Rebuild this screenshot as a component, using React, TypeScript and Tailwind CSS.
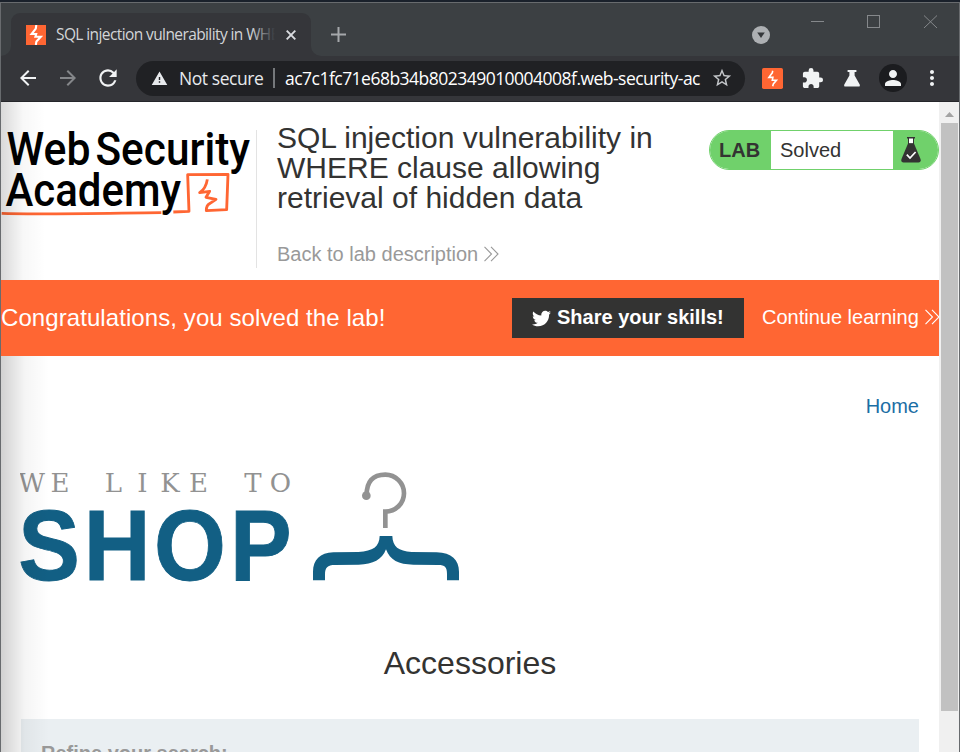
import type { ReactNode } from 'react';
import {
  MdArrowBack,
  MdArrowForward,
  MdExtension,
  MdMoreVert,
  MdPerson,
  MdRefresh,
  MdStarBorder,
  MdWarning,
} from 'react-icons/md';
import { FaTwitter } from 'react-icons/fa';

function BurpIcon({ size, radius, thin }: { size: number; radius: number; thin?: boolean }) {
  return (
    <svg width={size} height={size} viewBox="0 0 20 20">
      <rect width="20" height="20" rx={radius} fill="#ff6633" />
      {thin ? (
        <path d="M10.2 2.6 L9.8 4.6 L6.6 8.9 H10.4 L9.8 11.6 H13.8 L10.8 15.2 L10.2 17.4" fill="none" stroke="#fff" strokeWidth="1.5" />
      ) : (
        <path d="M10.3 0 L9.8 3.6 L5.6 9 H10.2 L9.4 11.8 H14.8 L10.4 16.6 L9.8 20" fill="none" stroke="#fff" strokeWidth="2.1" />
      )}
    </svg>
  );
}

function ToolButton({ children, dim }: { children: ReactNode; dim?: boolean }) {
  return (
    <div className={`flex h-10 w-10 shrink-0 items-center justify-center ${dim ? 'text-[#85878a]' : 'text-[#f1f3f4]'}`}>
      {children}
    </div>
  );
}

function TabStrip() {
  return (
    <div className="flex h-[53px] shrink-0 items-end bg-[#3c4043]">
      <svg width="10" height="10" viewBox="0 0 10 10">
        <path d="M10 0 V10 H0 A10 10 0 0 0 10 0Z" fill="#35363a" />
      </svg>
      <div className="flex h-[43px] w-[300px] items-center rounded-t-[9px] bg-[#35363a] pl-[15px]">
        <BurpIcon size={20} radius={0} />
        <div className="relative ml-[10px] w-[219px] overflow-hidden whitespace-nowrap text-[15.5px] leading-5 tracking-[-0.6px] text-[#d3d5d8]">
          <span className="relative -top-px">SQL injection vulnerability in WHE</span>
          <div className="absolute inset-y-0 right-0 w-6 bg-gradient-to-r from-transparent to-[#35363a]" />
        </div>
        <svg className="ml-[11px]" width="10" height="10" viewBox="0 0 10 10">
          <path d="M.7 .7 L9.3 9.3 M9.3 .7 L.7 9.3" stroke="#dadce0" strokeWidth="1.9" />
        </svg>
      </div>
      <svg width="10" height="10" viewBox="0 0 10 10">
        <path d="M0 0 V10 H10 A10 10 0 0 1 0 0Z" fill="#35363a" />
      </svg>
      <svg className="mb-[14px] ml-[10px]" width="15" height="15" viewBox="0 0 15 15">
        <path d="M7.5 0 V15 M0 7.5 H15" stroke="#a5a8ab" strokeWidth="2" />
      </svg>
      <svg className="mb-[12px] ml-[406px]" width="18" height="18" viewBox="0 0 18 18">
        <circle cx="9" cy="9" r="9" fill="#adb0b3" />
        <path d="M5.2 6.4 H12.8 L9 12Z" fill="#35383b" />
      </svg>
      <svg className="mb-[27px] ml-[41px]" width="128" height="14" viewBox="0 0 128 14" fill="none" stroke="#85888b">
        <path d="M0 6.5 H13" />
        <rect x="56.5" y=".5" width="12" height="12" />
        <path d="M113 .5 L126 13 M126 .5 L113 13" />
      </svg>
    </div>
  );
}

function Toolbar() {
  return (
    <div className="flex h-[46px] shrink-0 items-center border-b border-[#25262a] bg-[#35363a] pb-px pl-[7px]">
      <ToolButton><MdArrowBack size={24} /></ToolButton>
      <ToolButton dim><MdArrowForward size={24} /></ToolButton>
      <ToolButton><MdRefresh size={26} /></ToolButton>
      <div className="ml-2 flex h-[35px] w-[609px] items-center rounded-full bg-[#202124] pl-[15px] text-[17.5px] text-white">
        <MdWarning size={17} className="text-[#e8eaed]" />
        <div className="ml-[11px] w-[90px] whitespace-nowrap tracking-[-0.44px] text-[#e8eaed]">Not secure</div>
        <div className="ml-1 h-5 w-[2px] bg-[#75787b]" />
        <div className="ml-[10px] w-[416px] overflow-hidden whitespace-nowrap tracking-[-0.52px]">
          ac7c1fc71e68b34b802349010004008f.web-security-ac
        </div>
        <MdStarBorder size={22} className="ml-[10px] text-[#c4c7ca]" />
      </div>
      <div className="ml-[7px] flex">
        <ToolButton><BurpIcon size={21} radius={1.6} thin /></ToolButton>
        <ToolButton><MdExtension size={23} /></ToolButton>
        <ToolButton>
          <svg width="16" height="17" viewBox="0 0 16 17" fill="currentColor">
            <path d="M3.6 0 H12.4 V2 H10.6 V5.6 L15.7 14.4 Q16.4 16.6 14.4 16.6 H1.6 Q-.4 16.6 .3 14.4 L5.4 5.6 V2 H3.6Z" />
          </svg>
        </ToolButton>
        <ToolButton>
          <div className="ml-px flex size-7 items-center justify-center rounded-full bg-[#1b1c1f]">
            <MdPerson size={24} />
          </div>
        </ToolButton>
        <ToolButton><MdMoreVert size={24} /></ToolButton>
      </div>
    </div>
  );
}

function AcademyLogo() {
  return (
    <svg className="shrink-0" width="254" height="96" viewBox="1 126 254 96">
      <g fontFamily="Roboto, 'Liberation Sans', sans-serif" fontSize="47" fontWeight="500" fill="#000">
        <text y="165.4">
          <tspan x="6.5" textLength="84" lengthAdjust="spacingAndGlyphs">Web</tspan>
          <tspan x="95.5" textLength="154.5" lengthAdjust="spacingAndGlyphs">Security</tspan>
        </text>
        <text x="5.5" y="206.3" textLength="175.5" lengthAdjust="spacingAndGlyphs">Academy</text>
      </g>
      <g transform="translate(0 110) scale(.33333)" fill="none" stroke="#ff6633" strokeLinejoin="round">
        <path d="M5 310 C100 314 300 310 484 308 M520 306 L567 304 L563 194 L684 193 L680 299 L619 302 Q619 285 629 281 L648 268 L618 262 L629 244 L599 248 Q618 235 622 208" strokeWidth="8.5" />
      </g>
    </svg>
  );
}

function DoubleChevron({ color }: { color: string }) {
  return (
    <svg className="shrink-0" width="15" height="16" viewBox="0 0 15 16" fill="none" stroke={color} strokeWidth="1.1">
      <path d="M.5 .8 L7.5 8 L.5 15.2 M7 .8 L14 8 L7 15.2" />
    </svg>
  );
}

function LabBadge() {
  return (
    <div className="mt-7 flex h-10 w-[230px] shrink-0 overflow-hidden rounded-full border border-[#70d16b] bg-white text-[20px] leading-[38px] text-[#333332]">
      <div className="w-[61px] bg-[#70d16b] pl-[9px] font-bold">LAB</div>
      <div className="w-[122px] pl-[9px]">Solved</div>
      <div className="flex flex-1 items-center bg-[#70d16b] pl-2">
        <svg width="20" height="26" viewBox="0 0 20 26">
          <path d="M6 0 H14 V1.5 H13 V7 H7 V1.5 H6Z" fill="#333332" />
          <rect x="8" y="1.5" width="4" height="4.8" fill="#fff" />
          <path d="M7 6.5 H13 L19.5 22 Q20.4 25.5 17.5 25.5 H2.5 Q-.4 25.5 .5 22Z" fill="#333332" />
          <path d="M5.8 17.6 L9 21 L14.6 15" fill="none" stroke="#fff" strokeWidth="1.7" />
        </svg>
      </div>
    </div>
  );
}

function LabHeader() {
  return (
    <header className="flex h-[178px] w-[938px] items-start">
      <div className="mt-6"><AcademyLogo /></div>
      <div className="ml-px mt-7 h-[138px] w-px bg-[#e3e3e3]" />
      <div className="ml-5 mt-[21px] w-[432px] shrink-0 whitespace-nowrap">
        <h1 className="text-[30px] leading-[30px] text-[#333332]">
          SQL injection vulnerability in
          <br />
          WHERE clause allowing
          <br />
          retrieval of hidden data
        </h1>
        <a className="mt-[29px] flex items-center gap-[6px] text-[20px] leading-6 text-[#999]">
          Back to lab description <DoubleChevron color="#999" />
        </a>
      </div>
      <LabBadge />
    </header>
  );
}

function SolvedBanner() {
  return (
    <section className="flex h-[76px] w-[938px] items-center overflow-hidden bg-[#ff6633] text-white">
      <p className="w-[511px] shrink-0 whitespace-nowrap text-[24px] tracking-[0.08px]">
        Congratulations, you solved the lab!
      </p>
      <div className="flex h-10 w-[232px] shrink-0 items-center whitespace-nowrap bg-[#333332] pl-5 text-[20px] font-bold">
        <FaTwitter size={19} />
        <span className="-mt-0.5 ml-[6px] leading-[38px]">Share your skills!</span>
      </div>
      <a className="-mt-0.5 ml-[18px] flex items-center gap-[6px] whitespace-nowrap text-[20px] leading-[22px]">
        Continue learning <DoubleChevron color="#fff" />
      </a>
    </section>
  );
}

function ShopLogo() {
  return (
    <svg width="445" height="120" viewBox="20 465 445 120">
      <text
        x="31.5 60 113.5 142.5 170 198.5 253 280.5"
        y="492"
        textAnchor="middle"
        fontFamily="'DejaVu Serif', serif"
        fontSize="26"
        fill="#929292"
      >
        WELIKETO
      </text>
      <g transform="scale(.92 1)">
        <text
          x="53.3 127.2 206.5 283.5"
          y="580.4"
          textAnchor="middle"
          fontFamily="'Liberation Sans', Arial, sans-serif"
          fontSize="100.5"
          fontWeight="700"
          fill="#125f84"
          stroke="#125f84"
          strokeWidth=".9"
        >
          SHOP
        </text>
      </g>
      <g transform="translate(290 450) scale(.33333)">
        <path d="M230 137 Q229 74 286 74 A56 55.5 0 0 1 286 185 V234" fill="none" stroke="#929292" strokeWidth="14" />
        <circle cx="229" cy="137" r="13" fill="#929292" />
        <path
          d="M269 258 H307 C308 290 325 303 365 306 L440 307 C485 308 507 330 507 365 V391 H471 V372 C471 352 465 345 445 345 L370 344 C325 344 300 330 288 298 C276 330 250 342 206 344 L135 345 C112 345 105 352 105 375 V391 H69 V365 C69 330 90 308 130 307 L205 306 C250 303 268 290 269 258Z"
          fill="#125f84"
        />
      </g>
    </svg>
  );
}

function Scrollbar() {
  return (
    <div className="flex w-5 shrink-0 flex-col items-center bg-[#f0f0f0]">
      <div className="flex h-[21px] w-full items-center justify-center">
        <svg width="9" height="5" viewBox="0 0 9 5" className="mt-1">
          <path d="M0 5 L4.5 0 L9 5Z" fill="#a3a3a3" />
        </svg>
      </div>
      <div className="ml-px h-[588px] w-[17px] bg-[#c1c1c1]" />
    </div>
  );
}

export default function App() {
  return (
    <div className="flex h-[752px] w-[960px] flex-col overflow-hidden border-t-2 border-[#1a212b] font-['Liberation_Sans',Arial,sans-serif]">
      <div className="flex min-h-0 flex-1 flex-col border-x border-t border-[#686b6e]">
        <div className="font-['Open_Sans','Noto_Sans',sans-serif]">
          <TabStrip />
          <Toolbar />
        </div>
        <div className="flex min-h-0 flex-1 bg-white">
          <main className="relative w-[938px] shrink-0 overflow-hidden">
            <LabHeader />
            <SolvedBanner />
            <nav className="mt-[38px] flex justify-end pr-5 text-[20px] leading-6 text-[#1b6ea5]">Home</nav>
            <div className="ml-[19px] mt-[47px]"><ShopLogo /></div>
            <h2 className="mt-[60px] text-center text-[32px] leading-9 text-[#333332]">Accessories</h2>
            <div className="mx-5 mt-[38px] h-20 bg-[#eaeff2] pl-5 pt-[22px] text-[20px] font-bold leading-6 text-[#999]">
              Refine your search:
            </div>
            <div className="pointer-events-none absolute left-0 top-0 h-[178px] w-11 bg-gradient-to-r from-black/15 via-black/3 to-transparent" />
            <div className="pointer-events-none absolute bottom-0 left-0 top-[254px] w-12 bg-gradient-to-r from-black/18 via-black/4 to-transparent" />
          </main>
          <Scrollbar />
        </div>
      </div>
    </div>
  );
}
